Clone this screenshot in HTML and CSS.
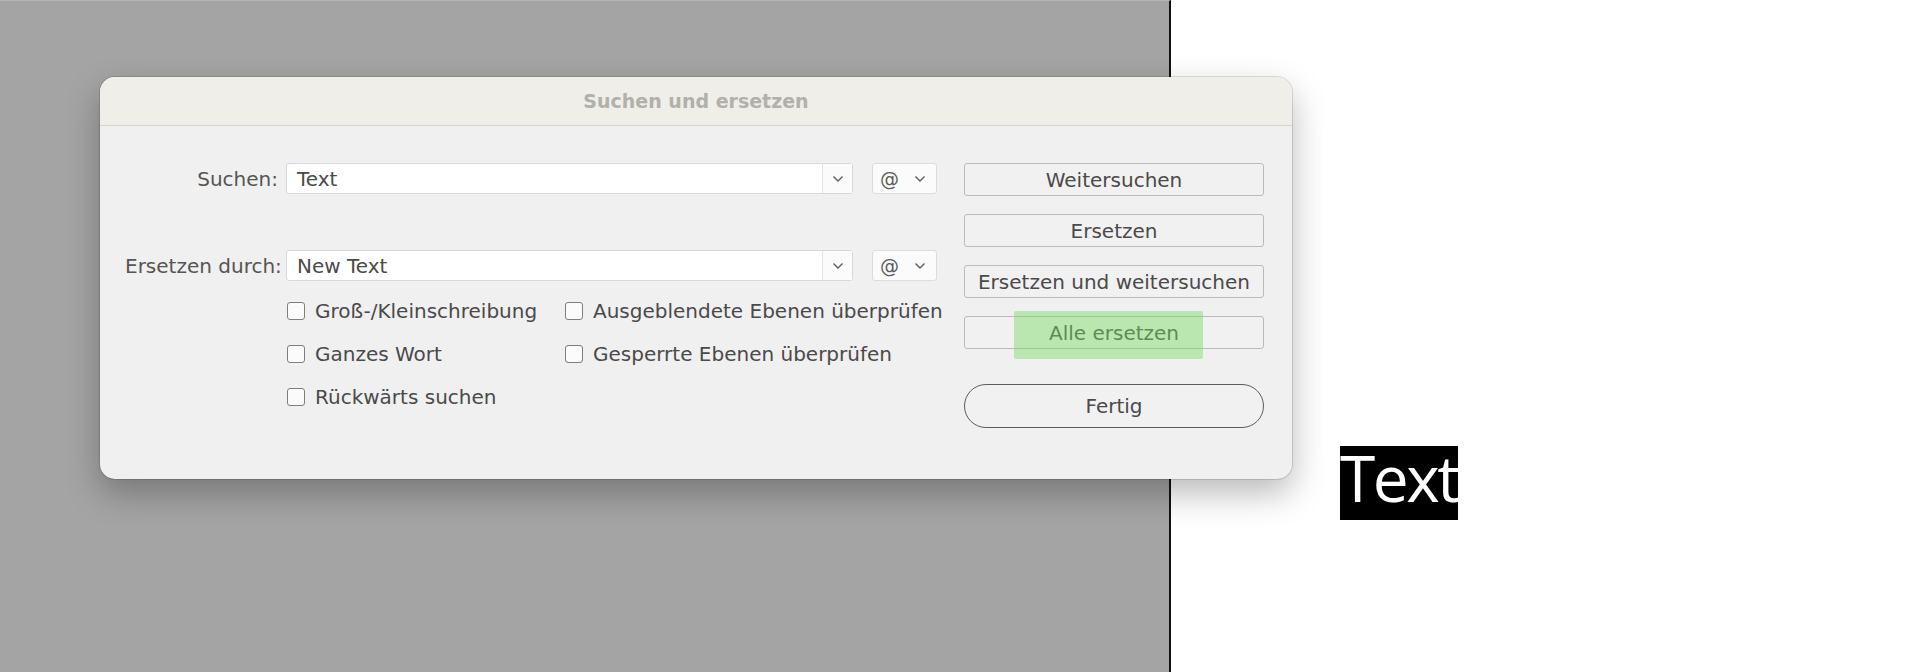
FILE: index.html
```html
<!DOCTYPE html>
<html lang="de">
<head>
    <meta charset="UTF-8">
    <title>Suchen und ersetzen</title>
    <link rel="stylesheet" href="styles.css">
</head>
<body>
    <div class="workspace">
        <div class="pasteboard"></div>
        <div class="artboard">
            <span class="text-frame">Text</span>
        </div>
    </div>

    <div class="dialog">
        <div class="dialog-title">Suchen und ersetzen</div>
        <div class="dialog-body">
            <div class="form">
                <div class="field-row">
                    <label class="field-label">Suchen:</label>
                    <div class="combo">
                        <span class="combo-value">Text</span>
                        <span class="combo-arrow">
                            <svg width="12" height="8" viewBox="0 0 12 8"><path d="M1.5 1.5 L6 6 L10.5 1.5" fill="none" stroke="#5c5c5c" stroke-width="1.4"/></svg>
                        </span>
                    </div>
                    <div class="at-select">
                        <span class="at">@</span>
                        <svg width="12" height="8" viewBox="0 0 12 8"><path d="M1.5 1.5 L6 6 L10.5 1.5" fill="none" stroke="#5c5c5c" stroke-width="1.4"/></svg>
                    </div>
                </div>
                <div class="field-row">
                    <label class="field-label">Ersetzen durch:</label>
                    <div class="combo">
                        <span class="combo-value">New Text</span>
                        <span class="combo-arrow">
                            <svg width="12" height="8" viewBox="0 0 12 8"><path d="M1.5 1.5 L6 6 L10.5 1.5" fill="none" stroke="#5c5c5c" stroke-width="1.4"/></svg>
                        </span>
                    </div>
                    <div class="at-select">
                        <span class="at">@</span>
                        <svg width="12" height="8" viewBox="0 0 12 8"><path d="M1.5 1.5 L6 6 L10.5 1.5" fill="none" stroke="#5c5c5c" stroke-width="1.4"/></svg>
                    </div>
                </div>
                <div class="options">
                    <div class="option"><span class="checkbox"></span>Groß-/Kleinschreibung</div>
                    <div class="option"><span class="checkbox"></span>Ausgeblendete Ebenen überprüfen</div>
                    <div class="option"><span class="checkbox"></span>Ganzes Wort</div>
                    <div class="option"><span class="checkbox"></span>Gesperrte Ebenen überprüfen</div>
                    <div class="option"><span class="checkbox"></span>Rückwärts suchen</div>
                </div>
            </div>
            <div class="actions">
                <button class="btn">Weitersuchen</button>
                <button class="btn">Ersetzen</button>
                <button class="btn">Ersetzen und weitersuchen</button>
                <div class="btn-wrap">
                    <button class="btn">Alle ersetzen</button>
                    <span class="highlight"></span>
                </div>
                <button class="btn btn-done">Fertig</button>
            </div>
        </div>
    </div>
</body>
</html>
```

FILE: styles.css
```css
* {
    margin: 0;
    padding: 0;
    box-sizing: border-box;
}

body {
    font-family: "DejaVu Sans", sans-serif;
    width: 1906px;
    height: 672px;
    overflow: hidden;
    position: relative;
}

.workspace {
    display: flex;
    height: 672px;
}

.pasteboard {
    width: 1171px;
    background: #a4a4a4;
    border-top: 1px solid #b6b6b6;
    border-right: 2px solid #111;
}

.artboard {
    flex: 1;
    background: #fff;
    position: relative;
}

.text-frame {
    position: absolute;
    left: 169px;
    top: 446px;
    height: 74px;
    background: #000;
    color: #fff;
    font-family: "Open Sans", sans-serif;
    font-size: 64px;
    line-height: 64px;
    letter-spacing: -2.5px;
}

.dialog {
    position: absolute;
    left: 100px;
    top: 77px;
    width: 1192px;
    height: 402px;
    background: #f0f0f0;
    border-radius: 15px;
    overflow: hidden;
    box-shadow: 0 14px 34px rgba(0, 0, 0, 0.28), 0 0 0 1px rgba(0, 0, 0, 0.12);
}

.dialog-title {
    height: 49px;
    background: #f0eee8;
    border-bottom: 1px solid #d6d4d0;
    text-align: center;
    font-weight: bold;
    font-size: 19px;
    line-height: 48px;
    color: #b2b0ab;
}

.dialog-body {
    display: flex;
    padding: 37px 28px 0 25px;
}

.form {
    width: 812px;
}

.field-row {
    display: flex;
    align-items: center;
    height: 31px;
}

.field-row + .field-row {
    margin-top: 56px;
}

.field-label {
    width: 153px;
    margin-right: 8px;
    text-align: right;
    white-space: nowrap;
    font-size: 20px;
    color: #555;
}

.combo {
    width: 567px;
    height: 31px;
    display: flex;
    background: #fff;
    border: 1px solid #d8d8d8;
    border-radius: 3px;
}

.combo-value {
    flex: 1;
    padding-left: 10px;
    font-size: 20px;
    line-height: 30px;
    color: #4a4a4a;
}

.combo-arrow {
    width: 30px;
    display: flex;
    align-items: center;
    justify-content: center;
    border-left: 1px solid #e4e4e4;
    background: #fbfbfb;
}

.at-select {
    width: 65px;
    height: 31px;
    margin-left: 19px;
    display: flex;
    align-items: center;
    justify-content: space-between;
    padding: 0 10px 0 7px;
    background: #fbfbfb;
    border: 1px solid #dcdcdc;
    border-radius: 3px;
}

.at {
    font-size: 19px;
    color: #5a5a5a;
}

.options {
    display: grid;
    grid-template-columns: 278px auto;
    grid-auto-rows: 43px;
    margin-top: 8px;
    margin-left: 162px;
}

.option {
    display: flex;
    align-items: center;
    gap: 10px;
    font-size: 20px;
    color: #4a4a4a;
    white-space: nowrap;
}

.checkbox {
    width: 18px;
    height: 18px;
    border: 1.5px solid #7e7e7e;
    border-radius: 3px;
    background: #fbfbfb;
}

.actions {
    width: 300px;
    margin-left: 27px;
    display: flex;
    flex-direction: column;
    gap: 18px;
}

.btn {
    height: 33px;
    width: 100%;
    font-family: inherit;
    font-size: 20px;
    color: #4a4a4a;
    background: #f1f1f1;
    border: 1.5px solid #bababa;
    border-radius: 3px;
}

.btn-wrap {
    position: relative;
}

.highlight {
    position: absolute;
    left: 50px;
    top: -5px;
    width: 189px;
    height: 48px;
    background: rgba(120, 218, 98, 0.45);
    border-radius: 2px;
}

.btn-done {
    height: 44px;
    margin-top: 17px;
    border-radius: 22px;
    border-color: #5c5c5c;
}
```
